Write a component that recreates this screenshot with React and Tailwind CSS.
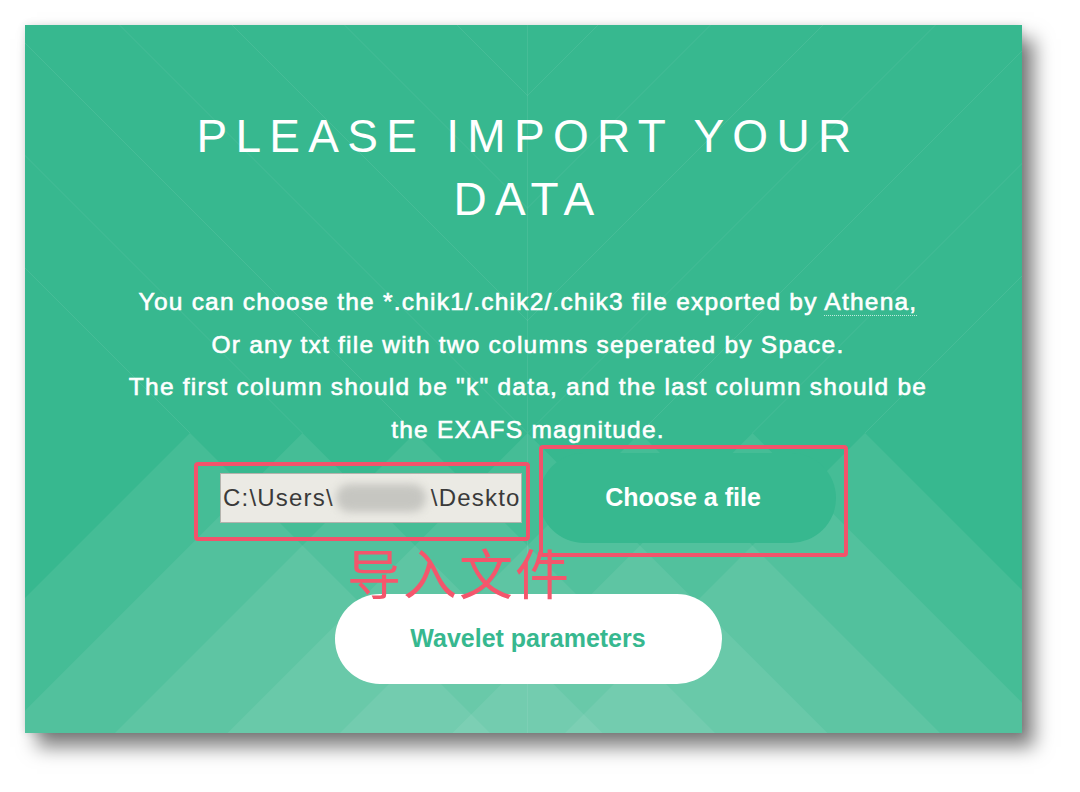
import React from "react";

// card is a fixed panel, pattern is drawn in card coordinates
const CARD_W = 997;
const CARD_H = 708;
const APEX_Y = 408;
const MID = 502.5;
const APEXES = [165, 277.5, 390, 502.5, 615, 727.5, 840];

const Backdrop = () => (
  <svg
    className="absolute inset-0 h-full w-full"
    viewBox={`0 0 ${CARD_W} ${CARD_H}`}
    preserveAspectRatio="none"
  >
    <defs>
      <clipPath id="half-left">
        <rect x="0" y="0" width={MID} height={CARD_H} />
      </clipPath>
      <clipPath id="half-right">
        <rect x={MID} y="0" width={CARD_W - MID} height={CARD_H} />
      </clipPath>
    </defs>

    {/* faint diagonals in the upper part */}
    <g stroke="#fff" strokeOpacity="0.08" strokeWidth="1">
      <g clipPath="url(#half-left)">
        {APEXES.map((a) => (
          <line key={a} x1={a} y1={APEX_Y} x2={a - APEX_Y} y2={0} />
        ))}
      </g>
      <g clipPath="url(#half-right)">
        {APEXES.map((a) => (
          <line key={a} x1={a} y1={APEX_Y} x2={a + APEX_Y} y2={0} />
        ))}
      </g>
      <line x1={MID} y1="0" x2={MID} y2={CARD_H} />
    </g>

    {/* overlapping mountains, lighter toward the bottom */}
    <g fill="#fff" fillOpacity="0.07">
      {APEXES.map((a) => (
        <polygon
          key={a}
          points={`${a},${APEX_Y} ${a + 330},${APEX_Y + 330} ${a - 330},${APEX_Y + 330}`}
        />
      ))}
    </g>
  </svg>
);

const App = () => {
  return (
    <div className="min-h-screen bg-white p-[25px] font-['Liberation_Sans',Arial,sans-serif]">
      <div className="relative h-[708px] w-[997px] overflow-hidden bg-[#37b88f] shadow-[0_0_8px_rgba(0,0,0,0.12),12px_14px_18px_rgba(0,0,0,0.5)]">
        <Backdrop />

        {/* Content */}
        <div className="relative flex flex-col items-center pl-[9px] pt-[80px]">
          <h1 className="max-w-[700px] text-center text-[46px] font-normal uppercase leading-[63px] tracking-[0.18em] text-white">
            Please import your data
          </h1>

          <p className="mt-[50px] max-w-[830px] text-center text-[24.5px] font-normal leading-[42.5px] tracking-[0.05em] text-white [-webkit-text-stroke:0.6px_#fff]">
            You can choose the *.chik1/.chik2/.chik3 file exported by{" "}
            <span className="border-b border-dotted border-white/70">Athena,</span>
            <br />
            Or any txt file with two columns seperated by Space.
            <br />
            The first column should be "k" data, and the last column should be
            the EXAFS magnitude.
          </p>

          {/* File picker */}
          <div className="mt-[2px] flex items-center gap-[17px]">
            <div className="flex h-[50px] w-[302px] items-center overflow-hidden whitespace-nowrap border border-[#b3b3ad] bg-[#ebeae4] pl-[2px] text-[24px] tracking-[0.05em] text-[#3a3a3a]">
              <span>{"C:\\Users\\"}</span>
              <span className="ml-[2px] mr-[5px] inline-block h-[28px] w-[90px] shrink-0 rounded-full bg-[#c6c6c1] blur-[4px]" />
              <span>{"\\Desktop"}</span>
            </div>
            <button className="h-[90px] w-[297px] rounded-full bg-[#37b88f] pr-[9px] text-[25px] font-bold text-white">
              Choose a file
            </button>
          </div>

          <button className="mt-[51px] h-[90px] w-[387px] rounded-full bg-white text-[25px] font-bold text-[#37b88f]">
            Wavelet parameters
          </button>
        </div>

        {/* red annotations drawn over the screenshot */}
        <div className="absolute left-[169px] top-[437px] h-[79px] w-[336px] rounded-[4px] border-[4px] border-[#f2536b]" />
        <div className="absolute left-[514px] top-[420px] h-[112px] w-[309px] rounded-[4px] border-[4px] border-[#f2536b]" />
        <div className="absolute left-[322px] top-[520px] font-['Noto_Sans_CJK_SC',sans-serif] text-[54px] leading-none tracking-[2px] text-[#f4566c]">
          导入文件
        </div>
      </div>
    </div>
  );
};

export default App;
